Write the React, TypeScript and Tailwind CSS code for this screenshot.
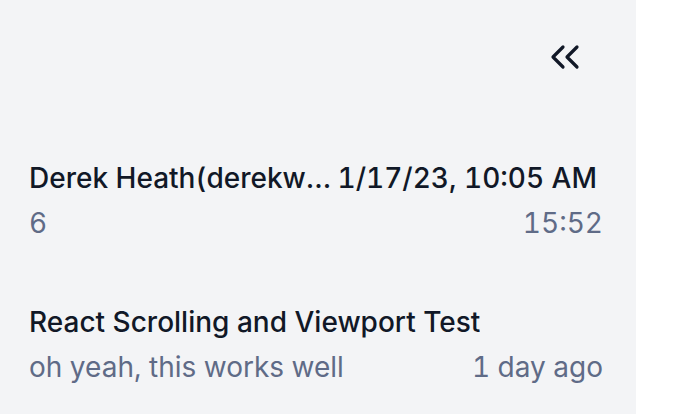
import React from 'react';

type Thread = {
  title: string;
  date: string;
  preview: string;
  time: string;
};

const threads: Thread[] = [
  { title: 'Derek Heath(derekwheath@gmail.com)', date: '1/17/23, 10:05 AM', preview: '6', time: '15:52' },
  { title: 'React Scrolling and Viewport Test', date: '', preview: 'oh yeah, this works well', time: '1 day ago' },
];

const ChevronsLeft = () => (
  <svg width="48" height="48" viewBox="0 0 24 24" fill="none" stroke="#111827" strokeWidth="1.6" strokeLinecap="round" strokeLinejoin="round">
    <path d="M11 17l-5-5 5-5" />
    <path d="M18 17l-5-5 5-5" />
  </svg>
);

export default function App() {
  return (
    <div className="flex h-[414px] w-[680px] bg-white tabular-nums" style={{ fontFamily: 'Inter, "Noto Sans", sans-serif' }}>
      <div className="flex w-[636px] flex-col bg-[#f3f4f6] pl-[29px] pr-[33px]">
        <div className="flex justify-end pt-[33px]">
          <button className="mr-[14px] flex h-[48px] w-[48px] items-center justify-center">
            <ChevronsLeft />
          </button>
        </div>
        <div className="mt-[80px] flex flex-col gap-[65px]">
          {threads.map((t) => (
            <div key={t.title} className="flex flex-col gap-[11px]">
              <div className="flex items-center gap-[3px] pr-[6px] text-[28px] font-[550] leading-[34px] text-[#111827]">
                <span className="min-w-0 truncate">{t.title}</span>
                {t.date && <span className="shrink-0">{t.date}</span>}
              </div>
              <div className="flex items-center justify-between text-[28px] leading-[34px] text-[#5f6b87]">
                <span className="truncate">{t.preview}</span>
                <span className="shrink-0">{t.time}</span>
              </div>
            </div>
          ))}
        </div>
      </div>
    </div>
  );
}
